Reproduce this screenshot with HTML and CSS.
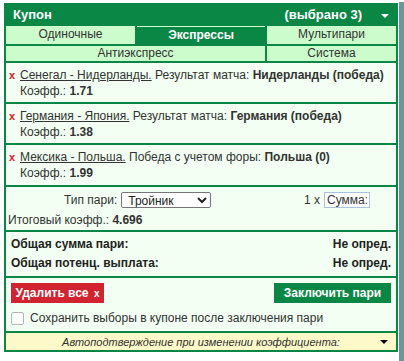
FILE: index.html
```html
<!DOCTYPE html>
<html lang="ru">
<head>
<meta charset="utf-8">
<link rel="stylesheet" href="styles.css">
</head>
<body>
<div class="scrollbar"></div>
<div class="coupon">
  <div class="head">
    <span class="title">Купон</span>
    <span class="count">(выбрано 3)</span>
    <span class="caret-w"></span>
  </div>
  <div class="tabs">
    <div class="tab">Одиночные</div>
    <div class="tab active">Экспрессы</div>
    <div class="tab">Мультипари</div>
    <div class="tab wide">Антиэкспресс</div>
    <div class="tab">Система</div>
  </div>
  <div class="body">
    <div class="item">
      <div><span class="del">x</span><span class="ev">Сенегал - Нидерланды.</span> Результат матча: <b>Нидерланды (победа)</b></div>
      <div class="odds">Коэфф.: <b>1.71</b></div>
    </div>
    <div class="item">
      <div><span class="del">x</span><span class="ev">Германия - Япония.</span> Результат матча: <b>Германия (победа)</b></div>
      <div class="odds">Коэфф.: <b>1.38</b></div>
    </div>
    <div class="item">
      <div><span class="del">x</span><span class="ev">Мексика - Польша.</span> Победа с учетом форы: <b>Польша (0)</b></div>
      <div class="odds">Коэфф.: <b>1.99</b></div>
    </div>
    <div class="bettype">
      <div class="typerow">
        <span class="lbl">Тип пари:</span>
        <select class="sel"><option>Тройник</option></select>
        <span class="mult">1 x</span>
        <input class="sum" type="text" placeholder="Сумма:">
      </div>
      <div class="total">Итоговый коэфф.: <b>4.696</b></div>
    </div>
    <div class="summary">
      <div class="srow"><span>Общая сумма пари:</span><span>Не опред.</span></div>
      <div class="srow"><span>Общая потенц. выплата:</span><span>Не опред.</span></div>
    </div>
    <div class="actions">
      <div class="btnrow">
        <div class="btn red">Удалить все <span class="x">x</span></div>
        <div class="btn green">Заключить пари</div>
      </div>
      <label class="keep"><span class="cb"></span>Сохранить выборы в купоне после заключения пари</label>
    </div>
    <div class="auto">
      <span class="autotext">Автоподтверждение при изменении коэффициента:</span>
      <span class="caret-b"></span>
    </div>
  </div>
</div>
</body>
</html>
```
FILE: styles.css
```css
html, body {
  margin: 0;
  padding: 0;
  background: #ffffff;
}
body {
  font-family: "Liberation Sans", Arial, sans-serif;
  font-size: 12px;
  color: #333;
  width: 404px;
  height: 361px;
  overflow: hidden;
  position: relative;
}
.scrollbar {
  position: absolute;
  top: 2px;
  right: 0;
  width: 5px;
  height: 359px;
  background: #6c9697;
}
.coupon {
  margin: 3px 0 0 4px;
  width: 394px;
  box-sizing: border-box;
  background: #0b8745;
  padding: 0 2px 2px;
}
.head {
  height: 23px;
  display: flex;
  align-items: center;
  color: #fff;
  font-weight: bold;
  font-size: 13px;
  padding: 0 7px 0 7px;
}
.title { flex: 1; }
.count { margin-right: 19px; }
.caret-w {
  width: 0;
  height: 0;
  border-left: 4px solid transparent;
  border-right: 4px solid transparent;
  border-top: 4px solid #fff;
  margin-top: 2px;
}
.tabs {
  display: grid;
  grid-template-columns: 129px 128px 129px;
  grid-template-rows: 18px 15px;
  gap: 2px;
}
.tab {
  background: #ccfccc;
  color: #333;
  text-align: center;
  line-height: 17px;
  font-size: 12px;
}
.tabs .tab:nth-child(n+4) { line-height: 15px; }
.tab.active {
  background: #0b8745;
  color: #fff;
  font-weight: bold;
  border-top: 1px solid #ccfccc;
  line-height: 16px;
}
.tab.wide { grid-column: span 2; }
.body {
  margin-top: 2px;
  display: flex;
  flex-direction: column;
  gap: 2px;
}
.body > div { background: #f2fff2; }
.item {
  padding: 4px 4px 3px 3px;
  line-height: 16px;
  height: 32px;
}
.item + .item + .item { height: 33px; }
.del {
  color: #d0202a;
  font-weight: bold;
  font-size: 11px;
  display: inline-block;
  width: 11px;
}
.ev {
  text-decoration: underline;
}
.odds { padding-left: 11px; }
.bettype {
  padding: 4px 2px 3px 2px;
  height: 36px;
}
.typerow {
  display: flex;
  align-items: center;
  height: 17px;
  padding-left: 56px;
}
.lbl { margin-right: 4px; }
.sel {
  width: 90px;
  height: 16px;
  font-family: "Liberation Sans", Arial, sans-serif;
  font-size: 12px;
  padding: 0 2px;
  border: 1px solid #767676;
  border-radius: 2px;
  background: #fff;
  color: #222;
  margin: 0;
}
.mult { margin-left: auto; margin-right: 4px; }
.sum {
  width: 46px;
  height: 16px;
  box-sizing: border-box;
  border: 1px solid #a9c3dd;
  padding: 0 2px;
  font-family: "Liberation Sans", Arial, sans-serif;
  font-size: 12px;
  margin: 0 24px 0 0;
}
.sum::placeholder { color: #333; }
.total {
  margin-top: 4px;
  line-height: 16px;
}
.summary {
  padding: 3px 5px 3px 5px;
  font-weight: bold;
  color: #222;
}
.srow {
  display: flex;
  justify-content: space-between;
  line-height: 19px;
}
.actions {
  padding: 5px 5px 4px 5px;
}
.btnrow {
  display: flex;
  justify-content: space-between;
}
.btn {
  height: 20px;
  line-height: 20px;
  color: #fff;
  font-weight: bold;
  font-size: 12px;
  text-align: center;
}
.btn.red {
  background: #d12330;
  width: 93px;
}
.btn.red .x { font-size: 10px; margin-left: 2px; }
.btn.green {
  background: #0b8745;
  width: 117px;
}
.keep {
  display: flex;
  align-items: center;
  height: 18px;
  margin-top: 6px;
  color: #333;
}
.cb {
  width: 11px;
  height: 11px;
  border: 1px solid #b5b5b5;
  border-radius: 2px;
  background: #fff;
  margin-right: 6px;
}
.body > .auto {
  background: #fdf9c9;
  height: 17px;
  display: flex;
  align-items: center;
  position: relative;
  justify-content: center;
}
.autotext {
  font-style: italic;
  font-size: 11px;
  color: #333;
}
.caret-b {
  position: absolute;
  right: 8px;
  top: 7px;
  width: 0;
  height: 0;
  border-left: 4px solid transparent;
  border-right: 4px solid transparent;
  border-top: 4px solid #000;
}
```
